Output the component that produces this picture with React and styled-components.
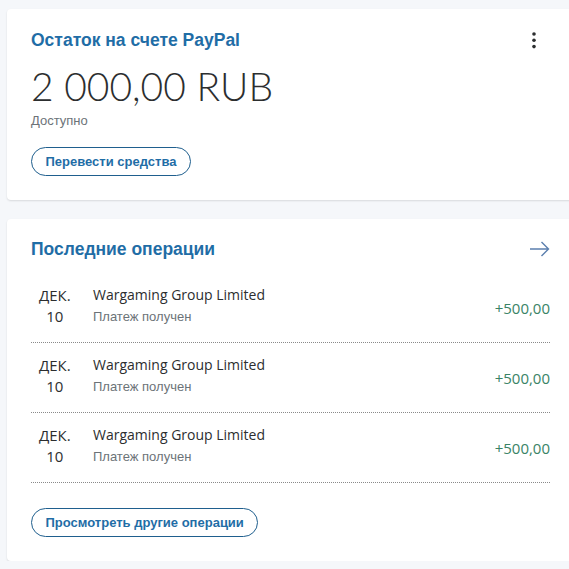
import React from "react";
import styled, { createGlobalStyle } from "styled-components";

const GlobalStyle = createGlobalStyle`
  html, body {
    margin: 0;
    padding: 0;
    background: #f5f7fa;
    overflow: hidden;
  }
`;

const Page = styled.div`
  padding: 9px 0 0 7px;
  display: flex;
  flex-direction: column;
  gap: 19px;
  width: 580px;
  font-family: "Open Sans", "Liberation Sans", sans-serif;
  color: #2c2e2f;
`;

const Card = styled.section`
  background: #ffffff;
  border-radius: 4px;
  box-shadow: 0 1px 2px rgba(0, 0, 0, 0.12);
  padding: ${(p) => p.$pad};
`;

const Header = styled.div`
  display: flex;
  align-items: center;
  justify-content: space-between;
  padding-right: ${(p) => p.$right};
`;

const Title = styled.h2`
  margin: 0;
  font-family: "Liberation Sans", Arial, sans-serif;
  font-size: 17.5px;
  font-weight: bold;
  color: #1f6da6;
  line-height: 24px;
`;

const IconButton = styled.button`
  border: none;
  background: none;
  padding: 0;
  display: flex;
  color: ${(p) => p.$color};
`;

const Amount = styled.div`
  margin-top: 12px;
  font-family: Lato, sans-serif;
  font-weight: 300;
  font-size: 39px;
  line-height: 44px;
  color: #2c2e2f;
`;

const Caption = styled.div`
  margin-top: 5px;
  font-family: "Liberation Sans", Arial, sans-serif;
  font-size: 13px;
  color: #6c7378;
  line-height: 16px;
`;

const PillButton = styled.button`
  margin-top: ${(p) => p.$top};
  height: 29px;
  padding: 0 13.5px;
  border: 1px solid #1f5f8e;
  border-radius: 15px;
  background: #fff;
  font-family: "Liberation Sans", Arial, sans-serif;
  font-size: 13px;
  font-weight: bold;
  color: #1f6da6;
`;

const List = styled.div`
  margin-top: 12px;
  width: 519px;
`;

const Row = styled.div`
  display: grid;
  grid-template-columns: 62px 1fr auto;
  align-items: center;
  height: 69px;
  border-bottom: 1px dotted #8a8a8a;
`;

const DateBox = styled.div`
  justify-self: start;
  margin-left: 8px;
  display: flex;
  flex-direction: column;
  align-items: center;
  font-family: "Open Sans", sans-serif;
  font-size: 15px;
  line-height: 21px;
  color: #2c2e2f;
  margin-top: -3px;
`;

const Info = styled.div`
  display: flex;
  flex-direction: column;
  margin-top: -3px;
`;

const Merchant = styled.div`
  font-family: "Open Sans", sans-serif;
  font-size: 14px;
  line-height: 20px;
  color: #2c2e2f;
`;

const Sub = styled.div`
  margin-top: 2px;
  font-family: "Liberation Sans", Arial, sans-serif;
  font-size: 13px;
  line-height: 20px;
  color: #6c7378;
`;

const Value = styled.div`
  font-family: "Open Sans", sans-serif;
  font-size: 15px;
  color: #3a8466;
  margin-top: 1px;
`;

const Kebab = () => (
  <svg width="6" height="18" viewBox="0 0 6 18">
    <circle cx="3" cy="3" r="1.8" fill="currentColor" />
    <circle cx="3" cy="9.3" r="1.8" fill="currentColor" />
    <circle cx="3" cy="15.6" r="1.8" fill="currentColor" />
  </svg>
);

const Arrow = () => (
  <svg width="20" height="16" viewBox="0 0 20 16" fill="none" stroke="currentColor" strokeWidth="1.4">
    <path d="M0 8h18.5M11.5 1l7 7-7 7" />
  </svg>
);

const ops = [1, 2, 3].map((i) => ({
  id: i,
  month: "ДЕК.",
  day: "10",
  name: "Wargaming Group Limited",
  status: "Платеж получен",
  value: "+500,00",
}));

export default function App() {
  return (
    <>
      <GlobalStyle />
      <Page>
        <Card $pad="19px 0 24px 24px">
          <Header $right="50px">
            <Title>Остаток на счете PayPal</Title>
            <IconButton $color="#2c2e2f">
              <Kebab />
            </IconButton>
          </Header>
          <Amount>2 000,00 RUB</Amount>
          <Caption>Доступно</Caption>
          <PillButton $top="18px">Перевести средства</PillButton>
        </Card>
        <Card $pad="18px 0 24px 24px">
          <Header $right="37px">
            <Title>Последние операции</Title>
            <IconButton $color="#5b7fae">
              <Arrow />
            </IconButton>
          </Header>
          <List>
            {ops.map((o) => (
              <Row key={o.id}>
                <DateBox>
                  <span>{o.month}</span>
                  <span>{o.day}</span>
                </DateBox>
                <Info>
                  <Merchant>{o.name}</Merchant>
                  <Sub>{o.status}</Sub>
                </Info>
                <Value>{o.value}</Value>
              </Row>
            ))}
          </List>
          <PillButton $top="25px">Просмотреть другие операции</PillButton>
        </Card>
      </Page>
    </>
  );
}
